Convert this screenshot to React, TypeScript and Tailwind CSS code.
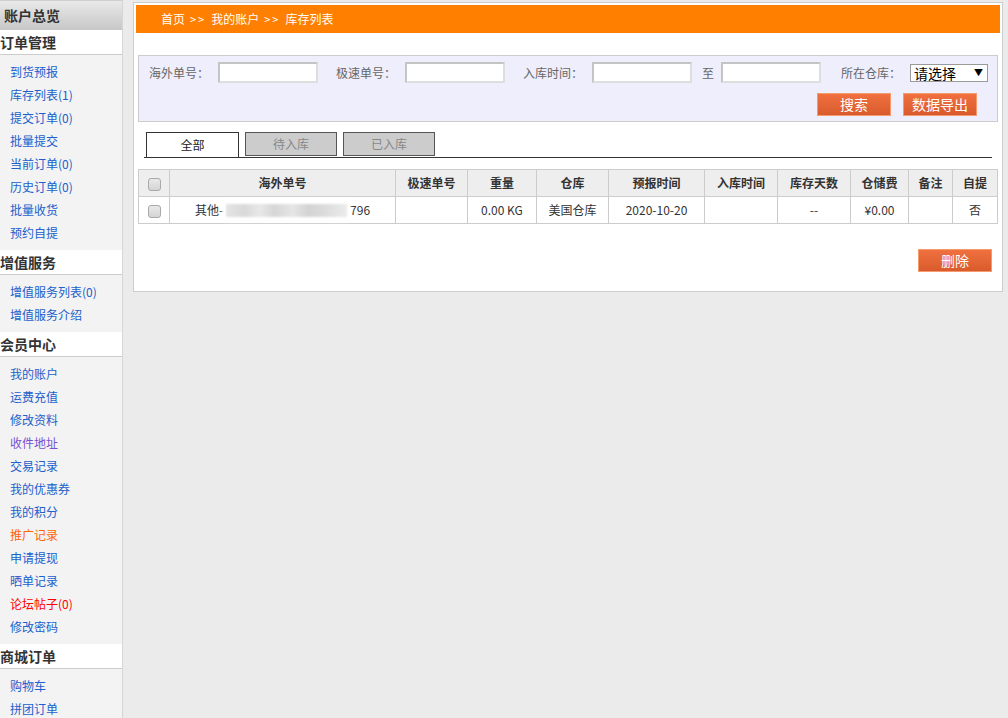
import React from "react";

type Link = { label: string; color?: string };
type Section = { title: string; links: Link[] };

const sections: Section[] = [
  {
    title: "订单管理",
    links: [
      { label: "到货预报" },
      { label: "库存列表(1)" },
      { label: "提交订单(0)" },
      { label: "批量提交" },
      { label: "当前订单(0)" },
      { label: "历史订单(0)" },
      { label: "批量收货" },
      { label: "预约自提" },
    ],
  },
  {
    title: "增值服务",
    links: [{ label: "增值服务列表(0)" }, { label: "增值服务介绍" }],
  },
  {
    title: "会员中心",
    links: [
      { label: "我的账户" },
      { label: "运费充值" },
      { label: "修改资料" },
      { label: "收件地址", color: "text-[#7b4fd0]" },
      { label: "交易记录" },
      { label: "我的优惠券" },
      { label: "我的积分" },
      { label: "推广记录", color: "text-[#ff6600]" },
      { label: "申请提现" },
      { label: "晒单记录" },
      { label: "论坛帖子(0)", color: "text-[#ff0000]" },
      { label: "修改密码" },
    ],
  },
  {
    title: "商城订单",
    links: [{ label: "购物车" }, { label: "拼团订单" }],
  },
];

const columns = [
  { key: "check", label: "", w: "w-[31px]" },
  { key: "no", label: "海外单号", w: "w-[226px]" },
  { key: "fast", label: "极速单号", w: "w-[72px]" },
  { key: "weight", label: "重量", w: "w-[69px]" },
  { key: "wh", label: "仓库", w: "w-[72px]" },
  { key: "pre", label: "预报时间", w: "w-[96px]" },
  { key: "in", label: "入库时间", w: "w-[73px]" },
  { key: "days", label: "库存天数", w: "w-[73px]" },
  { key: "fee", label: "仓储费", w: "w-[58px]" },
  { key: "note", label: "备注", w: "w-[44px]" },
  { key: "self", label: "自提", w: "w-[45px]" },
];

const Box = () => (
  <span className="inline-block w-[13px] h-[13px] rounded-[3px] border border-[#a9a9a9] bg-[linear-gradient(#e9e9e9,#d4d4d4)] align-middle" />
);

const TextInput = () => (
  <div className="shrink-0 w-[100px] h-[21px] bg-white border-2 border-t-[#c4c4c4] border-l-[#c4c4c4] border-b-[#dedede] border-r-[#dedede]" />
);

const OrangeBtn = ({ children, w }: { children: React.ReactNode; w: string }) => (
  <button
    className={`${w} h-[23px] border border-[#f59a6c] bg-[linear-gradient(#f0703e,#d95b2d)] text-white text-[14px] leading-[21px] text-center`}
  >
    {children}
  </button>
);

const Sep = () => <span className="mx-[5px] text-[11px] tracking-[2px]">&gt;&gt;</span>;

export default function App() {
  return (
    <div className="flex min-h-[718px] bg-[#ebebeb] font-['Noto_Sans_CJK_SC','Microsoft_YaHei',sans-serif] text-[12px] text-[#333]">
      {/* Sidebar */}
      <aside className="w-[123px] shrink-0 bg-[#f3f3f3] border-r border-[#d6d6d6]">
        <div className="h-[30px] border-t border-[#cfcfcf] bg-[linear-gradient(#e9e9e9,#c7c7c7)] pl-[4px] text-[14px] font-bold leading-[29px] text-[#333]">
          账户总览
        </div>
        {sections.map((s) => (
          <div key={s.title}>
            <div className="h-[25px] bg-white border-b border-[#cccccc] text-[14px] font-bold leading-[24px] text-[#333]">
              {s.title}
            </div>
            <ul className="pt-[5px] pb-[6px]">
              {s.links.map((l) => (
                <li
                  key={l.label}
                  className={`h-[23px] leading-[23px] pl-[10px] ${l.color ?? "text-[#2160cc]"}`}
                >
                  {l.label}
                </li>
              ))}
            </ul>
          </div>
        ))}
      </aside>

      {/* Main */}
      <main className="ml-[10px] mt-[2px] self-start w-[870px] bg-white border border-[#cccccc] p-[2px] pb-[19px]">
        <div className="h-[28px] bg-[#ff8000] pl-[25px] leading-[28px] text-white">
          首页<Sep />我的账户<Sep />库存列表
        </div>

        {/* Search panel */}
        <div className="mx-[2px] mt-[22px] h-[67px] bg-[#eeeefc] border border-[#cccccc] pl-[10px] pt-[6px] text-[#666]">
          <div className="flex items-center h-[21px]">
            <span className="shrink-0 w-[69px]">海外单号：</span>
            <TextInput />
            <span className="shrink-0 ml-[18px] w-[69px]">极速单号：</span>
            <TextInput />
            <span className="shrink-0 ml-[18px] w-[69px]">入库时间：</span>
            <TextInput />
            <span className="shrink-0 ml-[10px] w-[19px]">至</span>
            <TextInput />
            <span className="shrink-0 ml-[20px] w-[69px]">所在仓库：</span>
            <div className="relative shrink-0 w-[78px] h-[18px] bg-white border border-[#9a9a9a] pl-[3px] text-[14px] leading-[16px] text-black">
              请选择
              <span className="absolute right-[4px] top-[1px] text-[9px] leading-[14px]">▼</span>
            </div>
          </div>
          <div className="flex justify-end gap-[12px] mt-[10px] pr-[20px]">
            <OrangeBtn w="w-[74px]">搜索</OrangeBtn>
            <OrangeBtn w="w-[74px]">数据导出</OrangeBtn>
          </div>
        </div>

        {/* Tabs */}
        <div className="mx-[8px] mt-[10px] flex gap-[6px] pl-[2px] border-b border-[#333] w-[848px]">
          <div className="w-[93px] h-[25px] bg-white border border-b-0 border-[#333] text-center leading-[24px] text-[#222]">
            全部
          </div>
          <div className="w-[92px] h-[24px] mb-[1px] bg-[#cccccc] border border-[#555] text-center leading-[22px] text-[#888]">
            待入库
          </div>
          <div className="w-[92px] h-[24px] mb-[1px] bg-[#cccccc] border border-[#555] text-center leading-[22px] text-[#888]">
            已入库
          </div>
        </div>

        {/* Table */}
        <table className="mx-[2px] mt-[11px] w-[860px] table-fixed border-collapse text-center">
          <colgroup>
            {columns.map((c) => (
              <col key={c.key} className={c.w} />
            ))}
          </colgroup>
          <thead>
            <tr className="h-[27px] bg-[#eeeeee]">
              {columns.map((c) => (
                <th key={c.key} className="border border-[#cccccc] font-bold text-[#333]">
                  {c.key === "check" ? <Box /> : c.label}
                </th>
              ))}
            </tr>
          </thead>
          <tbody>
            <tr className="h-[27px]">
              <td className="border border-[#cccccc]">
                <Box />
              </td>
              <td className="border border-[#cccccc]">
                <span className="inline-flex items-center">
                  <span>其他-</span>
                  <span className="relative inline-block w-[127px] h-[13px]">
                    <span className="absolute inset-x-0 inset-y-[-4px] bg-white blur-[2px]" />
                    <span className="absolute inset-x-[3px] inset-y-0 blur-[1px] bg-[linear-gradient(90deg,#e4e4e4_0%,#d9d9d9_15%,#e8e8e8_28%,#d6d6d6_40%,#e6e6e6_55%,#d3d3d3_68%,#dcdcdc_82%,#ececec_100%)]" />
                  </span>
                  <span>796</span>
                </span>
              </td>
              <td className="border border-[#cccccc]"></td>
              <td className="border border-[#cccccc]">0.00 KG</td>
              <td className="border border-[#cccccc]">美国仓库</td>
              <td className="border border-[#cccccc]">2020-10-20</td>
              <td className="border border-[#cccccc]"></td>
              <td className="border border-[#cccccc]">--</td>
              <td className="border border-[#cccccc]">¥0.00</td>
              <td className="border border-[#cccccc]"></td>
              <td className="border border-[#cccccc]">否</td>
            </tr>
          </tbody>
        </table>

        <div className="flex justify-end mt-[25px] mr-[8px]">
          <OrangeBtn w="w-[74px]">删除</OrangeBtn>
        </div>
      </main>
    </div>
  );
}
